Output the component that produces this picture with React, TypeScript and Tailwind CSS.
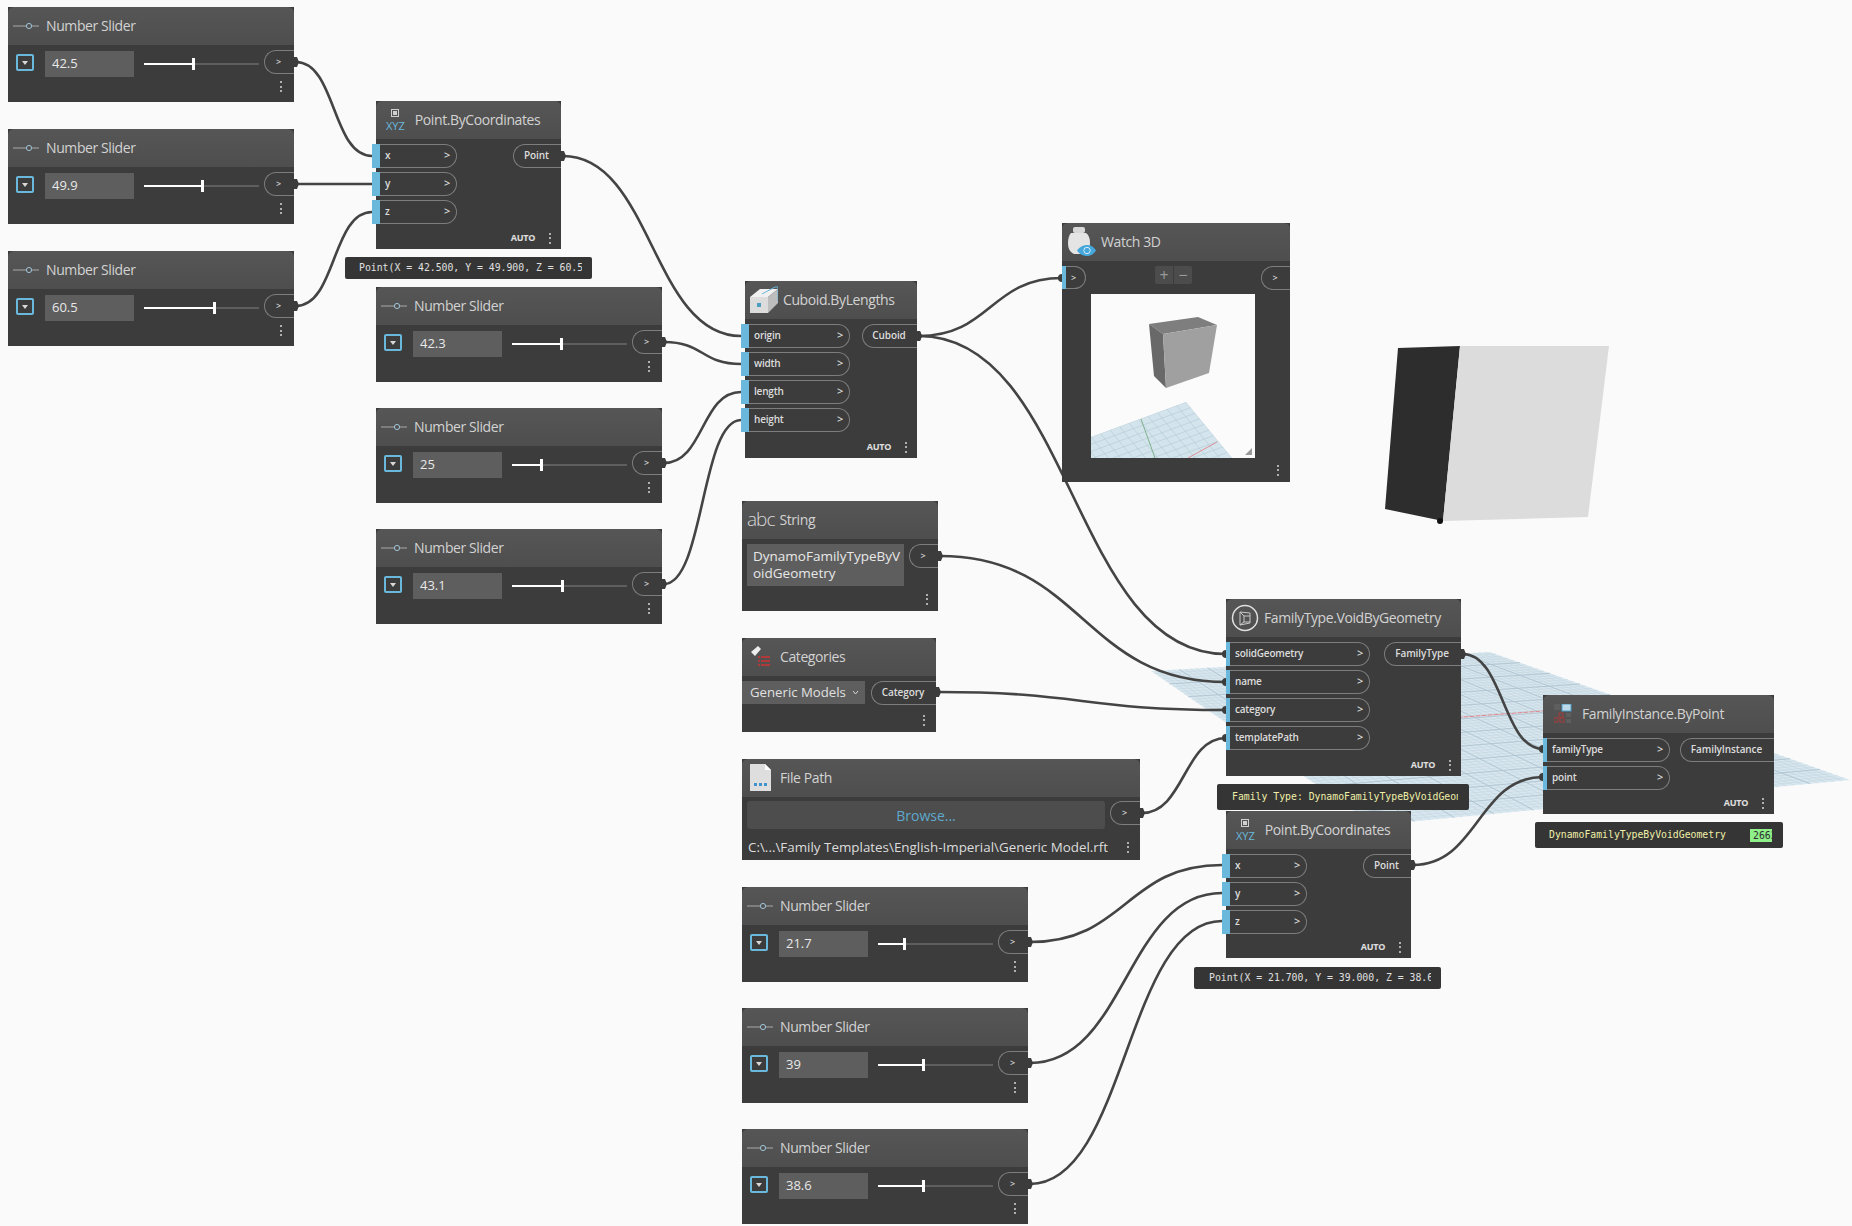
import type { ReactNode } from "react";

const wires: [number, number, number, number][] = [
  [296, 62, 372, 156],
  [296, 184, 372, 184],
  [296, 306, 372, 212],
  [563, 156, 741, 336],
  [664, 342, 741, 364],
  [664, 463, 741, 392],
  [664, 584, 741, 420],
  [919, 336, 1062, 278],
  [919, 336, 1226, 654],
  [940, 556, 1226, 682],
  [938, 692, 1226, 710],
  [1142, 813, 1226, 738],
  [1463, 654, 1543, 749],
  [1413, 865, 1543, 777],
  [1030, 942, 1222, 865],
  [1030, 1063, 1222, 893],
  [1030, 1184, 1222, 921],
];

// the ground plane behind the family nodes
const corners = { l: [1151, 671], t: [1490, 652], r: [1850, 780], b: [1375, 825] };

function lerp(a: number[], b: number[], k: number) {
  return [a[0] + (b[0] - a[0]) * k, a[1] + (b[1] - a[1]) * k];
}

function gridLines(n: number) {
  const out: string[] = [];
  for (let i = 1; i < n; i++) {
    const k = i / n;
    const a = lerp(corners.l, corners.t, k);
    const b = lerp(corners.b, corners.r, k);
    const c = lerp(corners.l, corners.b, k);
    const d = lerp(corners.t, corners.r, k);
    out.push(`M${a[0]} ${a[1]}L${b[0]} ${b[1]}`, `M${c[0]} ${c[1]}L${d[0]} ${d[1]}`);
  }
  return out.join("");
}

// same grid for the little preview, clipped by the viewport
function previewLines(step: number) {
  const out: string[] = [];
  for (let i = -6; i <= 12; i++) {
    const k = i * step;
    const ox = 46 * k;
    const oy = 56 * k;
    out.push(`M${-60 + ox} ${165 + oy}L${95 + ox} ${108 + oy}`);
    const px = 95 * k;
    const py = -35 * k;
    out.push(`M${px} ${143 + py}L${px + 70} ${228 + py}`);
  }
  return out.join("");
}

function Backdrop() {
  return (
    <svg className="absolute inset-0" width={1852} height={1226} viewBox="0 0 1852 1226">
      <polygon points="1398,348 1460,346 1443,521 1385,509" fill="#2d2d2d" />
      <polygon points="1460,346 1609,346 1588,517 1443,521" fill="#dcdcdc" />
      <circle cx={1440} cy={521} r={3} fill="#111111" />
      <polygon points="1151,671 1490,652 1850,780 1375,825" fill="#d8e7ef" />
      <path d={gridLines(60)} stroke="#c0d3dd" strokeWidth={0.5} fill="none" />
      <path d={gridLines(12)} stroke="#a9bfcb" strokeWidth={0.7} fill="none" />
      <line x1={1320} y1={728} x2={1660} y2={702} stroke="#e0868c" strokeWidth={1} strokeDasharray="5 1" />
      {wires.map(([x0, y0, x1, y1], i) => {
        const dx = Math.max((x1 - x0) * 0.5, 40);
        return (
          <path
            key={i}
            d={`M${x0} ${y0}C${x0 + dx} ${y0} ${x1 - dx} ${y1} ${x1} ${y1}`}
            stroke="#444444"
            strokeWidth={2.6}
            fill="none"
          />
        );
      })}
      {wires.map(([x0, y0, x1, y1], i) => (
        <g key={i} fill="#3c3c3c">
          <path d={`M${x0 - 2} ${y0 - 5}L${x0 + 1} ${y0 - 5}L${x0 + 3} ${y0}L${x0 + 1} ${y0 + 5}L${x0 - 2} ${y0 + 5}Z`} />
          <circle cx={x1} cy={y1} r={x1 === 1062 || x1 === 1226 || x1 === 1543 ? 4 : 0} />
        </g>
      ))}
    </svg>
  );
}

function Dots() {
  return (
    <div className="flex flex-col gap-[2.5px]">
      <span className="h-[2px] w-[2px] bg-[#b0b0b0]" />
      <span className="h-[2px] w-[2px] bg-[#b0b0b0]" />
      <span className="h-[2px] w-[2px] bg-[#b0b0b0]" />
    </div>
  );
}

function Node({
  title,
  icon,
  className,
  children,
}: {
  title: string;
  icon: ReactNode;
  className: string;
  children: ReactNode;
}) {
  return (
    <div className={`absolute flex flex-col bg-[#3c3c3c] font-['Open_Sans',sans-serif] ${className}`}>
      <div className="flex h-[38px] shrink-0 items-center overflow-hidden rounded-t-[6px] bg-gradient-to-b from-[#565656] to-[#4e4e4e] pb-[1px] text-[14px] tracking-[-0.4px] text-[#d2d2d2]">
        {icon}
        <span className="whitespace-nowrap">{title}</span>
      </div>
      {children}
    </div>
  );
}

function InPort({ label, width, wide }: { label: string; width: string; wide?: boolean }) {
  return (
    <div className={`relative flex h-[24px] items-center justify-between rounded-r-[12px] border-y border-r border-[#7d7d7d] pb-[1px] pr-[6px] text-[10px] font-semibold tracking-[-0.2px] text-[#dcdcdc] ${width}`}>
      <span className={`absolute top-[-1px] h-[24px] bg-[#6ab8dc] ${wide ? "left-[-4px] w-[8px]" : "left-0 w-[4px]"}`} />
      <span className="pl-[9px]">{label}</span>
      <span className="text-[11px]">&gt;</span>
    </div>
  );
}

function OutPort({ label, className }: { label: string; className: string }) {
  return (
    <div className={`flex h-[24px] shrink-0 items-center justify-center rounded-l-[12px] border-y border-l border-[#7d7d7d] pb-[1px] pr-[2px] font-semibold tracking-[-0.1px] text-[#dcdcdc] ${label === ">" ? "text-[9px]" : "text-[10px]"} ${className}`}>
      {label}
    </div>
  );
}

function Footer({ auto }: { auto?: boolean }) {
  return (
    <div className="mt-auto flex h-[22px] shrink-0 items-center justify-end gap-[14px] pr-[10px]">
      {auto && <span className="text-[9px] font-bold tracking-[-0.3px] text-[#e0e0e0]">AUTO</span>}
      <Dots />
    </div>
  );
}

function SliderIcon() {
  return (
    <svg className="ml-[5px] mr-[7px]" width={26} height={10} viewBox="0 0 26 10" fill="none">
      <path d="M0 5H13M19 5H26" stroke="#a8a8a8" strokeWidth={1} />
      <circle cx={16} cy={5} r={2.6} stroke="#9fc4d6" strokeWidth={1} />
    </svg>
  );
}

function NumberSlider({ value, className }: { value: number; className: string }) {
  const pos = value * 0.985;
  return (
    <Node title="Number Slider" icon={<SliderIcon />} className={`h-[95px] w-[286px] ${className}`}>
      <div className="flex items-start pl-[8px] pt-[5px]">
        <div className="mt-[4px] flex h-[17px] w-[18px] items-center justify-center rounded-[2px] border-2 border-[#6ab8dc]">
          <span className="border-x-[3px] border-t-[4px] border-x-transparent border-t-[#d8d8d8]" />
        </div>
        <div className="ml-[11px] mt-[1px] flex h-[26px] w-[89px] items-center bg-[#5e5e5e] pl-[7px] text-[13px] text-[#e8e8e8]">{value}</div>
        <div className="relative ml-[10px] mt-[13px] h-[2px] w-[115px] bg-[#5e5e5e]">
          <div className="h-[2px] bg-white" style={{ width: `${pos}%` }} />
          <div className="absolute top-[-5px] h-[12px] w-[3px] bg-white" style={{ left: `${pos}%` }} />
        </div>
        <OutPort label=">" className="ml-[5px] w-[30px]" />
      </div>
      <div className="mt-auto flex h-[21px] justify-end pr-[12px]">
        <Dots />
      </div>
    </Node>
  );
}

function PointIcon({ ml }: { ml: string }) {
  return (
    <div className={`mr-[10px] flex flex-col items-center leading-none ${ml}`}>
      <span className="mb-[3px] flex h-[8px] w-[8px] items-center justify-center border border-[#cfcfcf]">
        <span className="h-[4px] w-[4px] bg-[#cfcfcf]" />
      </span>
      <span className="text-[11px] tracking-normal text-[#6ab8dc]">XYZ</span>
    </div>
  );
}

function PointNode({ className }: { className: string }) {
  return (
    <Node title="Point.ByCoordinates" icon={<PointIcon ml="ml-[10px]" />} className={`w-[185px] ${className}`}>
      <div className="flex justify-between pt-[5px]">
        <div className="flex flex-col gap-[4px]">
          <InPort label="x" width="w-[81px]" wide />
          <InPort label="y" width="w-[81px]" wide />
          <InPort label="z" width="w-[81px]" wide />
        </div>
        <OutPort label="Point" className="w-[48px]" />
      </div>
      <Footer auto />
    </Node>
  );
}

function Tooltip({ className, children }: { className: string; children: ReactNode }) {
  return (
    <div className={`absolute flex items-center overflow-hidden rounded-[2px] bg-[#353535] pt-[1px] font-['DejaVu_Sans_Mono',monospace] text-[9.8px] whitespace-nowrap ${className}`}>
      {children}
    </div>
  );
}

function Watch3D() {
  return (
    <Node
      title="Watch 3D"
      icon={
        <svg className="ml-[6px] mr-[5px]" width={28} height={32} viewBox="0 0 28 32">
          <rect x={5} y={1} width={12} height={6} rx={2} fill="#d8d8d8" />
          <path d="M3 7H18C21 9 22 13 22 17C22 23 20 26 16 28H6C2 26 0 23 0 17C0 13 1 9 3 7Z" fill="#e4e4e4" />
          <path d="M9 24.5C12 20 17 19 19 19C22 19 25 20 28 24.5C25 29 22 30 19 30C16 30 12 29 9 24.5Z" fill="#45a7dc" />
          <circle cx={19} cy={24.5} r={3.2} fill="none" stroke="#d8eef8" strokeWidth={1} />
        </svg>
      }
      className="left-[1062px] top-[223px] h-[259px] w-[228px]"
    >
      <div className="relative flex h-[33px] items-start justify-between pt-[5px]">
        <div className="relative flex h-[23px] w-[24px] items-center justify-center rounded-r-[12px] border-y border-r border-[#7d7d7d] text-[9px] font-semibold text-[#dcdcdc]">
          <span className="absolute left-0 top-[-1px] h-[23px] w-[4px] bg-[#6ab8dc]" />
          &gt;
        </div>
        <div className="flex gap-[1px]">
          <span className="flex h-[18px] w-[18px] items-center justify-center rounded-l-[2px] bg-[#4c4c4c] text-[16px] leading-none text-[#9a9a9a]">+</span>
          <span className="flex h-[18px] w-[18px] items-center justify-center rounded-r-[2px] bg-[#4c4c4c] text-[16px] leading-none text-[#9a9a9a]">−</span>
        </div>
        <OutPort label=">" className="h-[23px] w-[29px]" />
      </div>
      <svg className="ml-[29px]" width={164} height={164} viewBox="0 0 164 164">
        <defs>
          <clipPath id="plane">
            <polygon points="0,143 95,108 141,164 0,164" />
          </clipPath>
        </defs>
        <rect width={164} height={164} fill="#fbfbfb" />
        <polygon points="0,143 95,108 141,164 0,164" fill="#d4e4ec" />
        <g clipPath="url(#plane)" fill="none">
          <path d={previewLines(0.1)} stroke="#b2c9d5" strokeWidth={0.6} />
        </g>
        <line x1={50} y1={125} x2={64} y2={164} stroke="#7fb28c" strokeWidth={1} />
        <line x1={126} y1={148} x2={97} y2={164} stroke="#df8f96" strokeWidth={1} />
        <polygon points="58,30 107,23 126,31 72,40" fill="#7e7e7e" />
        <polygon points="58,30 72,40 75,94 63,82" fill="#696969" />
        <polygon points="72,40 126,31 118,79 75,94" fill="#a0a0a0" />
        <polygon points="161,154 161,161 154,161" fill="#999999" />
      </svg>
      <div className="mt-auto flex h-[24px] items-center justify-end pr-[11px]">
        <Dots />
      </div>
    </Node>
  );
}

export default function App() {
  return (
    <div className="relative h-[1226px] w-[1852px] overflow-hidden bg-[#fafafa]">
      <Backdrop />

      <NumberSlider value={42.5} className="left-[8px] top-[7px]" />
      <NumberSlider value={49.9} className="left-[8px] top-[129px]" />
      <NumberSlider value={60.5} className="left-[8px] top-[251px]" />

      <PointNode className="left-[376px] top-[101px] h-[148px]" />
      <Tooltip className="left-[345px] top-[257px] h-[22px] w-[247px] pl-[14px] pr-[10px] text-[#e0e0e0]">
        <span className="block overflow-hidden">Point(X = 42.500, Y = 49.900, Z = 60.500)</span>
      </Tooltip>

      <NumberSlider value={42.3} className="left-[376px] top-[287px]" />
      <NumberSlider value={25} className="left-[376px] top-[408px]" />
      <NumberSlider value={43.1} className="left-[376px] top-[529px]" />

      <Node
        title="Cuboid.ByLengths"
        icon={
          <svg className="ml-[5px] mr-[5px]" width={28} height={30} viewBox="0 0 28 30">
            <polygon points="0,12 10,4 28,4 18,12" fill="#f0f0f0" />
            <polygon points="0,12 18,12 18,28 0,28" fill="#dcdcdc" />
            <polygon points="18,12 28,4 28,18 18,28" fill="#bdbdbd" />
            <path d="M12 9L25 2H28V16" stroke="#6ab8dc" strokeWidth={1} fill="none" />
            <rect x={7} y={18} width={4} height={4} fill="#4d9cc4" />
          </svg>
        }
        className="left-[745px] top-[281px] h-[177px] w-[172px]"
      >
        <div className="flex justify-between pt-[5px]">
          <div className="flex flex-col gap-[4px]">
            <InPort label="origin" width="w-[105px]" wide />
            <InPort label="width" width="w-[105px]" wide />
            <InPort label="length" width="w-[105px]" wide />
            <InPort label="height" width="w-[105px]" wide />
          </div>
          <OutPort label="Cuboid" className="w-[55px]" />
        </div>
        <Footer auto />
      </Node>

      <Watch3D />

      <Node
        title="String"
        icon={<span className="ml-[5px] mr-[5px] text-[19px] font-light leading-none tracking-[-1px] text-[#d8d8d8]">abc</span>}
        className="left-[742px] top-[501px] h-[110px] w-[196px]"
      >
        <div className="flex pt-[5px]">
          <div className="ml-[5px] flex h-[42px] w-[157px] items-center bg-[#5e5e5e] pl-[6px] text-[13.5px] leading-[17px] break-all text-[#e8e8e8]">
            DynamoFamilyTypeByVoidGeometry
          </div>
          <OutPort label=">" className="ml-[5px] w-[29px]" />
        </div>
        <div className="mt-auto flex h-[24px] items-center justify-end pr-[10px]">
          <Dots />
        </div>
      </Node>

      <Node
        title="Categories"
        icon={
          <svg className="ml-[9px] mr-[9px]" width={20} height={24} viewBox="0 0 20 24">
            <polygon points="0,7 7,1 10,4 4,11" fill="#eeeeee" />
            <path d="M7 12H19M7 16H19M7 20H19" stroke="#b03a3a" strokeWidth={2} strokeDasharray="2 1 9 0" />
          </svg>
        }
        className="left-[742px] top-[638px] h-[94px] w-[194px]"
      >
        <div className="flex pt-[5px]">
          <div className="flex h-[23px] w-[123px] items-center justify-between bg-[#5e5e5e] pl-[8px] pr-[6px] text-[13.2px] text-[#e0e0e0]">
            Generic Models
            <svg width={7} height={5} viewBox="0 0 7 5" fill="none">
              <path d="M1 1L3.5 4L6 1" stroke="#d8d8d8" strokeWidth={1} />
            </svg>
          </div>
          <OutPort label="Category" className="ml-[6px] w-[65px]" />
        </div>
        <div className="mt-auto flex h-[24px] items-center justify-end pr-[11px]">
          <Dots />
        </div>
      </Node>

      <Node
        title="File Path"
        icon={
          <svg className="ml-[8px] mr-[9px]" width={21} height={28} viewBox="0 0 21 28">
            <path d="M0 0H15L21 6V27H0Z" fill="#dedede" />
            <path d="M15 0L21 6H15Z" fill="#ffffff" />
            <rect x={4} y={19} width={3} height={3} fill="#3f93cf" />
            <rect x={9} y={19} width={3} height={3} fill="#3f93cf" />
            <rect x={14} y={19} width={3} height={3} fill="#3f93cf" />
          </svg>
        }
        className="left-[742px] top-[759px] h-[101px] w-[398px]"
      >
        <div className="flex pt-[4px]">
          <div className="ml-[5px] flex h-[28px] w-[358px] items-center justify-center rounded-[3px] bg-[#4d4d4d] text-[14px] text-[#5ea9cc]">
            Browse...
          </div>
          <OutPort label=">" className="ml-[5px] w-[30px]" />
        </div>
        <div className="mt-auto flex h-[26px] items-center justify-between pl-[6px] pr-[11px] text-[13.4px] text-[#dcdcdc]">
          <span className="whitespace-nowrap">C:\...\Family Templates\English-Imperial\Generic Model.rft</span>
          <Dots />
        </div>
      </Node>

      <NumberSlider value={21.7} className="left-[742px] top-[887px]" />
      <NumberSlider value={39} className="left-[742px] top-[1008px]" />
      <NumberSlider value={38.6} className="left-[742px] top-[1129px]" />

      <Node
        title="FamilyType.VoidByGeometry"
        icon={
          <svg className="ml-[5px] mr-[5px]" width={28} height={28} viewBox="0 0 28 28" fill="none">
            <circle cx={14} cy={14} r={12.5} stroke="#e0e0e0" strokeWidth={1.5} />
            <path d="M9 8L19 9V19L9 21ZM9 8L13 12V18L9 21M13 12H19M13 18H19" stroke="#c8c8c8" strokeWidth={1} />
          </svg>
        }
        className="left-[1226px] top-[599px] h-[177px] w-[235px]"
      >
        <div className="flex justify-between pt-[5px]">
          <div className="flex flex-col gap-[4px]">
            <InPort label="solidGeometry" width="w-[144px]" />
            <InPort label="name" width="w-[144px]" />
            <InPort label="category" width="w-[144px]" />
            <InPort label="templatePath" width="w-[144px]" />
          </div>
          <OutPort label="FamilyType" className="w-[77px]" />
        </div>
        <Footer auto />
      </Node>
      <Tooltip className="left-[1217px] top-[784px] h-[26px] w-[252px] pl-[15px] pr-[11px] text-[#efefa8]">
        <span className="block overflow-hidden">Family Type: DynamoFamilyTypeByVoidGeometry</span>
      </Tooltip>

      <PointNode className="left-[1226px] top-[811px] h-[147px]" />
      <Tooltip className="left-[1194px] top-[967px] h-[22px] w-[247px] pl-[15px] pr-[10px] text-[#e0e0e0]">
        <span className="block overflow-hidden">Point(X = 21.700, Y = 39.000, Z = 38.600)</span>
      </Tooltip>

      <Node
        title="FamilyInstance.ByPoint"
        icon={
          <svg className="ml-[11px] mr-[10px]" width={18} height={20} viewBox="0 0 18 20" fill="none">
            <rect x={0} y={0} width={6} height={6} fill="#5e5e5e" />
            <rect x={8} y={0} width={9} height={7} fill="#bcd9ea" stroke="#4d9cc4" />
            <rect x={5} y={9} width={4} height={4} stroke="#a33c3c" />
            <rect x={0} y={14} width={4} height={4} stroke="#a33c3c" />
            <rect x={6} y={14} width={4} height={4} stroke="#a33c3c" />
            <rect x={12} y={9} width={5} height={4} fill="#5e5e5e" />
            <rect x={12} y={15} width={5} height={4} fill="#5e5e5e" />
          </svg>
        }
        className="left-[1543px] top-[695px] h-[119px] w-[231px]"
      >
        <div className="flex justify-between pt-[5px]">
          <div className="flex flex-col gap-[4px]">
            <InPort label="familyType" width="w-[127px]" />
            <InPort label="point" width="w-[127px]" />
          </div>
          <OutPort label="FamilyInstance" className="w-[94px]" />
        </div>
        <Footer auto />
      </Node>
      <Tooltip className="left-[1535px] top-[822px] h-[26px] w-[248px] pl-[14px] text-[#efefa8]">
        <span className="w-[201px] shrink-0">DynamoFamilyTypeByVoidGeometry</span>
        <span className="h-[13px] w-[22px] overflow-hidden bg-[#8ff08a] pl-[3px] leading-[13px] text-[#2c2c2c]">2662</span>
      </Tooltip>
    </div>
  );
}
